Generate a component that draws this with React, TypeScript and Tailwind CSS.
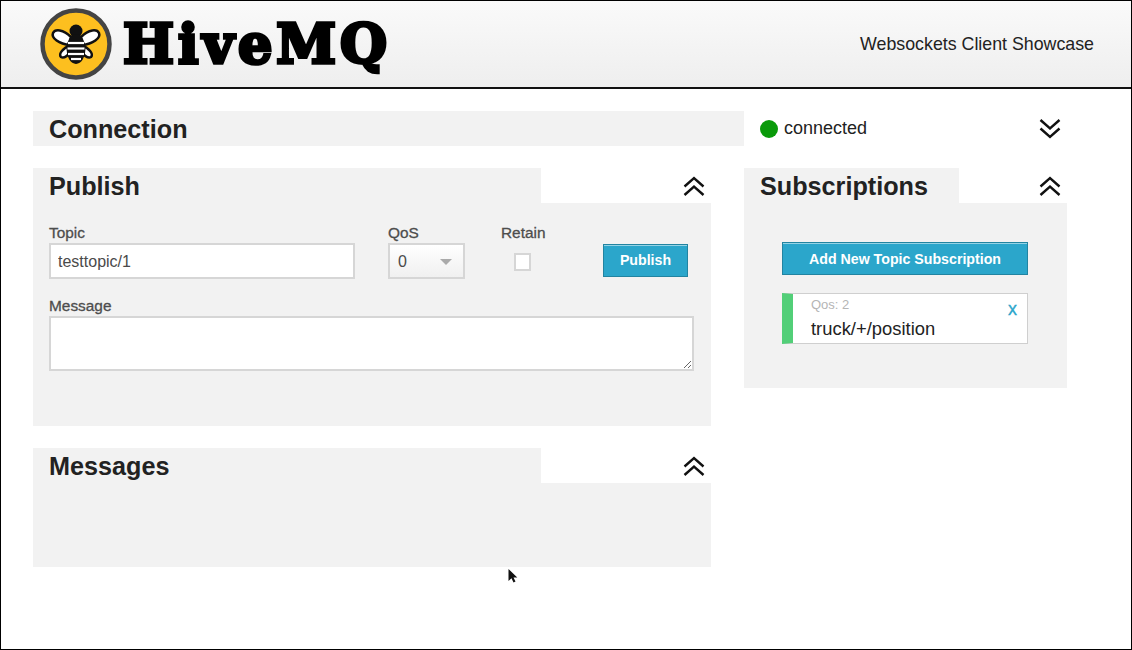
import React from "react";

function Chevrons({ down }: { down?: boolean }) {
  return (
    <svg width="24" height="22" viewBox="0 0 24 22" fill="none" stroke="#111" strokeWidth="2.4">
      {down ? (
        <>
          <path d="M2.5 2 12 10.5 21.5 2" />
          <path d="M2.5 10.5 12 19l9.5-8.5" />
        </>
      ) : (
        <>
          <path d="M2.5 11.5 12 3l9.5 8.5" />
          <path d="M2.5 20 12 11.5l9.5 8.5" />
        </>
      )}
    </svg>
  );
}

function Logo() {
  return (
    <div className="flex items-center">
      <svg width="74" height="74" viewBox="0 0 74 74">
        <circle cx="37" cy="37" r="33.5" fill="#fdbf1f" stroke="#444" strokeWidth="4.5" />
        <g stroke="#111" strokeWidth="2.5" fill="#fff">
          <path d="M32 30 C24 22 16 22 14 26 C12 31 20 37 31 38 Z" />
          <path d="M42 30 C50 22 58 22 60 26 C62 31 54 37 43 38 Z" />
          <path d="M32 38 C24 41 19 47 22 50 C25 52 30 48 33 43 Z" />
          <path d="M42 38 C50 41 55 47 52 50 C49 52 44 48 41 43 Z" />
        </g>
        <circle cx="37" cy="24" r="6.5" fill="#111" />
        <ellipse cx="37" cy="42" rx="9.5" ry="15" fill="#111" />
        <g stroke="#fff" strokeWidth="2.2">
          <path d="M29 36h16" />
          <path d="M28.5 41.5h17" />
          <path d="M29 47h16" />
          <path d="M32 52h10" />
        </g>
      </svg>
      <div className="ml-[10px] mb-[1px] font-['DejaVu_Serif',serif] font-bold text-[54px] leading-none text-black [-webkit-text-stroke:3.5px_black] tracking-[4px]">
        HiveMQ
      </div>
    </div>
  );
}

function Section({
  title,
  tabWidth,
  children,
}: {
  title: string;
  tabWidth: string;
  children: React.ReactNode;
}) {
  return (
    <div>
      <div className="flex h-[35px]">
        <div className={`${tabWidth} bg-[#f2f2f2] pl-4 text-[25.2px] leading-[36px] font-bold text-[#222]`}>{title}</div>
        <div className="flex-1 flex justify-end items-center pr-[5px]">
          <Chevrons />
        </div>
      </div>
      <div className="bg-[#f2f2f2]">{children}</div>
    </div>
  );
}

function Label({ children }: { children: React.ReactNode }) {
  return (
    <div className="h-[19px] text-[15.4px] leading-[17px] text-[#4d4d4d] [-webkit-text-stroke:0.3px_#4d4d4d]">
      {children}
    </div>
  );
}

export default function App() {
  return (
    <div className="relative w-[1132px] h-[650px] bg-white overflow-hidden font-['Liberation_Sans',sans-serif] border border-black">
      <header className="h-[88px] border-b-2 border-[#111] bg-gradient-to-b from-[#fafafa] to-[#eeeeee] flex items-center justify-between pl-[38px] pr-[37px]">
        <Logo />
        <div className="text-[17.8px] text-[#222]">Websockets Client Showcase</div>
      </header>

      <main className="pl-[32px] pt-[22px]">
        <div className="flex h-[35px]">
          <div className="w-[711px] bg-[#f2f2f2] pl-4 text-[25.2px] leading-[36px] font-bold text-[#222]">Connection</div>
          <div className="w-[323px] flex items-center justify-between pl-4 pr-[5px]">
            <div className="flex items-center gap-[6px] text-[18px] text-[#222]">
              <span className="w-[18px] h-[18px] rounded-full bg-[#0a9a0a]"></span>
              connected
            </div>
            <Chevrons down />
          </div>
        </div>

        <div className="flex gap-[33px] mt-[22px] items-start">
          <div className="w-[678px] flex flex-col gap-[22px]">
            <Section title="Publish" tabWidth="w-[508px]">
              <div className="h-[223px] pl-4 pt-[21px]">
                <div className="flex">
                  <div className="w-[306px]">
                    <Label>Topic</Label>
                    <input
                      readOnly
                      value="testtopic/1"
                      className="block w-full h-[36px] bg-white border-2 border-[#d6d6d6] px-[7px] pt-[2px] text-[16px] text-[#4a4a4a]"
                    />
                  </div>
                  <div className="w-[77px] ml-[33px]">
                    <Label>QoS</Label>
                    <div className="h-[36px] border-2 border-[#d6d6d6] bg-gradient-to-b from-white to-[#f0f0f0] flex items-center justify-between pl-2 pr-[11px] pt-[2px] text-[16px] text-[#4a4a4a]">
                      0
                      <span className="border-x-[6px] border-x-transparent border-t-[6px] border-t-[#aaa]"></span>
                    </div>
                  </div>
                  <div className="w-[102px] ml-[36px]">
                    <Label>Retain</Label>
                    <div className="w-[17px] h-[18px] ml-[13px] mt-[10px] bg-white border-2 border-[#d6d6d6]"></div>
                  </div>
                  <button className="mt-[20px] w-[85px] h-[33px] bg-[#2ba6cb] border border-[#2284a1] shadow-[inset_0_1px_0_rgba(255,255,255,0.5)] text-white text-[14.2px] font-bold">
                    Publish
                  </button>
                </div>
                <div className="mt-[18px]">
                  <Label>Message</Label>
                  <textarea readOnly className="block w-[645px] h-[55px] bg-white border-2 border-[#d6d6d6]"></textarea>
                </div>
              </div>
            </Section>
            <Section title="Messages" tabWidth="w-[508px]">
              <div className="h-[84px]"></div>
            </Section>
          </div>

          <div className="w-[323px]">
            <Section title="Subscriptions" tabWidth="w-[215px]">
              <div className="h-[185px] pl-[38px] pt-[39px]">
                <button className="block w-[246px] h-[33px] pt-[2px] bg-[#2ba6cb] border border-[#2284a1] shadow-[inset_0_1px_0_rgba(255,255,255,0.5)] text-white text-[14.2px] font-bold">
                  Add New Topic Subscription
                </button>
                <div className="relative mt-[18px] w-[246px] h-[51px] bg-white border border-[#cfcfcf] border-l-[11px] border-l-[#52cf78] pl-[18px]">
                  <div className="text-[13px] leading-[20px] pt-[1px] text-[#b5b5b5]">Qos: 2</div>
                  <div className="text-[18.4px] leading-[24px] mt-[2px] text-[#222]">truck/+/position</div>
                  <span className="absolute right-[10px] top-[4px] text-[18px] leading-[22px] text-[#2ba6cb] [-webkit-text-stroke:0.3px_#2ba6cb]">x</span>
                </div>
              </div>
            </Section>
          </div>
        </div>
      </main>

      <svg className="absolute left-[506px] top-[567px]" width="12" height="16" viewBox="0 0 12 16">
        <path d="M1.5 1v12l3-2.8 2 4.3 2-.9-2-4.2h3.8z" fill="#111" />
      </svg>
    </div>
  );
}
